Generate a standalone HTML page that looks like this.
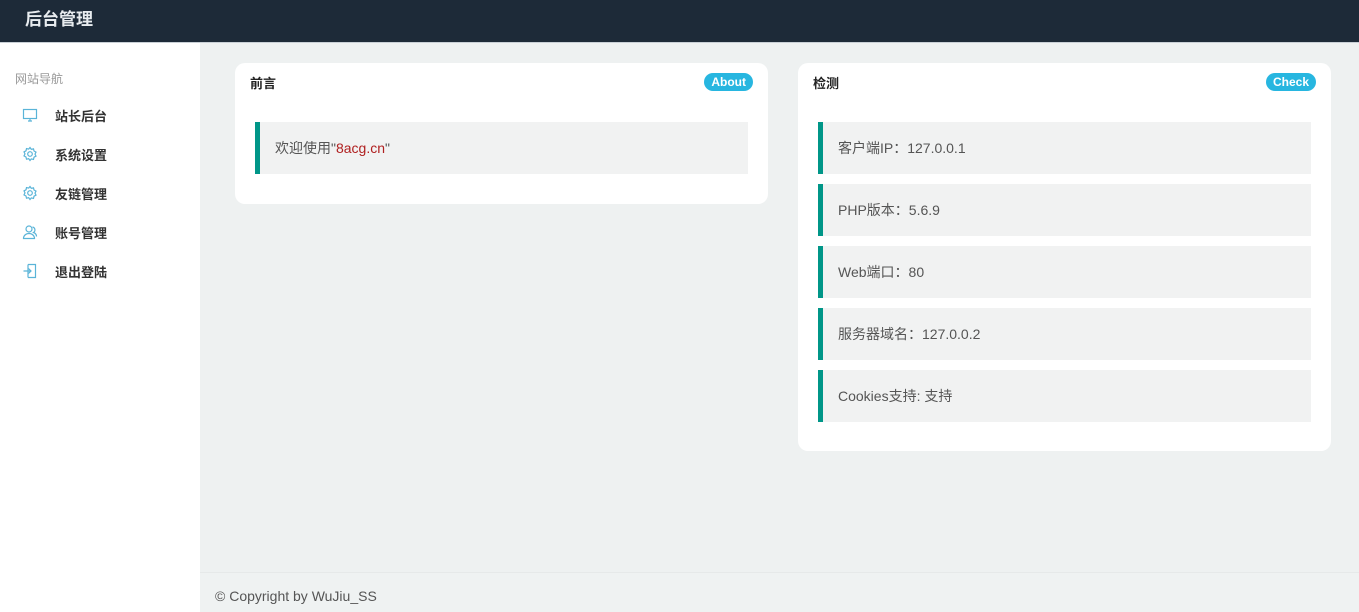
<!DOCTYPE html>
<html><head><meta charset="utf-8"><style>
*{margin:0;padding:0;box-sizing:border-box}
body{width:1359px;height:612px;overflow:hidden;background:#eef1f1;font-family:"Liberation Sans","Noto Sans CJK SC",sans-serif;position:relative}
.hd{position:absolute;left:0;top:0;width:1359px;height:43px;background:#1d2a38;border-bottom:1px solid #c9d0d6}
.hd span{position:absolute;left:25px;top:5px;color:#e8ecef;font-size:17px;font-weight:bold}
.sb{position:absolute;left:0;top:43px;width:200px;height:569px;background:#fff}
.sb .t{position:absolute;left:15px;top:27px;font-size:12px;color:#999}
.it{position:absolute;left:22px;height:20px;font-size:13px;font-weight:bold;color:#333;display:flex;align-items:center}
.it svg{width:16px;height:16px;margin-right:17px}
.card{position:absolute;background:#fff;border-radius:10px}
.card h3{position:absolute;left:15px;top:10px;font-size:13px;color:#222;font-weight:bold}
.badge{position:absolute;top:10px;right:15px;height:18px;padding:0 7px;border-radius:9px;background:#27b6e0;color:#fff;font-size:12px;font-weight:bold;line-height:18px}
.bq{position:absolute;left:20px;right:20px;height:52px;background:#f1f2f2;border-left:5px solid #009688;font-size:14px;color:#555;padding-left:15px;line-height:52px}
.ft{position:absolute;left:200px;top:572px;width:1159px;height:40px;background:#eff2f2;border-top:1px solid #e6e9e9;font-size:14px;color:#555;padding:15px 0 0 15px}
</style></head><body>
<div class="hd"><span>后台管理</span></div>
<div class="sb">
<div class="t">网站导航</div>
<div class="it" style="top:62px"><svg viewBox="0 0 16 16" fill="none" stroke="#5ab4d8" stroke-width="1.2"><rect x="1.5" y="2.5" width="13" height="9"/><path d="M6 14h4M8 11.5v2.5"/></svg>站长后台</div>
<div class="it" style="top:101px"><svg viewBox="0 0 16 16" fill="none" stroke="#5ab4d8" stroke-width="1.2"><circle cx="8" cy="8" r="2.3"/><path d="M8 1.5l1.3 1.8 2.2-.5.5 2.2 2 1.1-1 2 1 2-2 1.1-.5 2.2-2.2-.5L8 14.5l-1.3-1.8-2.2.5-.5-2.2-2-1.1 1-2-1-2 2-1.1.5-2.2 2.2.5z"/></svg>系统设置</div>
<div class="it" style="top:140px"><svg viewBox="0 0 16 16" fill="none" stroke="#5ab4d8" stroke-width="1.2"><circle cx="8" cy="8" r="2.3"/><path d="M8 1.5l1.3 1.8 2.2-.5.5 2.2 2 1.1-1 2 1 2-2 1.1-.5 2.2-2.2-.5L8 14.5l-1.3-1.8-2.2.5-.5-2.2-2-1.1 1-2-1-2 2-1.1.5-2.2 2.2.5z"/></svg>友链管理</div>
<div class="it" style="top:179px"><svg viewBox="0 0 16 16" fill="none" stroke="#5ab4d8" stroke-width="1.2"><circle cx="7" cy="5" r="3"/><path d="M1.5 14.5c0-3 2.5-5 5.5-5s5.5 2 5.5 5zM10.5 3a3 3 0 0 1 1 5.5c2 .7 3 2.5 3 4"/></svg>账号管理</div>
<div class="it" style="top:218px"><svg viewBox="0 0 16 16" fill="none" stroke="#5ab4d8" stroke-width="1.2"><path d="M6 1.5h7.5v13H6M6 1.5v13M1.5 8h7M6.5 5.5L9 8l-2.5 2.5"/></svg>退出登陆</div>
</div>
<div class="card" style="left:235px;top:63px;width:533px;height:141px">
<h3>前言</h3><div class="badge">About</div>
<div class="bq" style="top:59px">欢迎使用"<span style="color:#b02020">8acg.cn</span>"</div>
</div>
<div class="card" style="left:798px;top:63px;width:533px;height:388px">
<h3>检测</h3><div class="badge">Check</div>
<div class="bq" style="top:59px">客户端IP：127.0.0.1</div>
<div class="bq" style="top:121px">PHP版本：5.6.9</div>
<div class="bq" style="top:183px">Web端口：80</div>
<div class="bq" style="top:245px">服务器域名：127.0.0.2</div>
<div class="bq" style="top:307px">Cookies支持: 支持</div>
</div>
<div class="ft">© Copyright by WuJiu_SS</div>
</body></html>
